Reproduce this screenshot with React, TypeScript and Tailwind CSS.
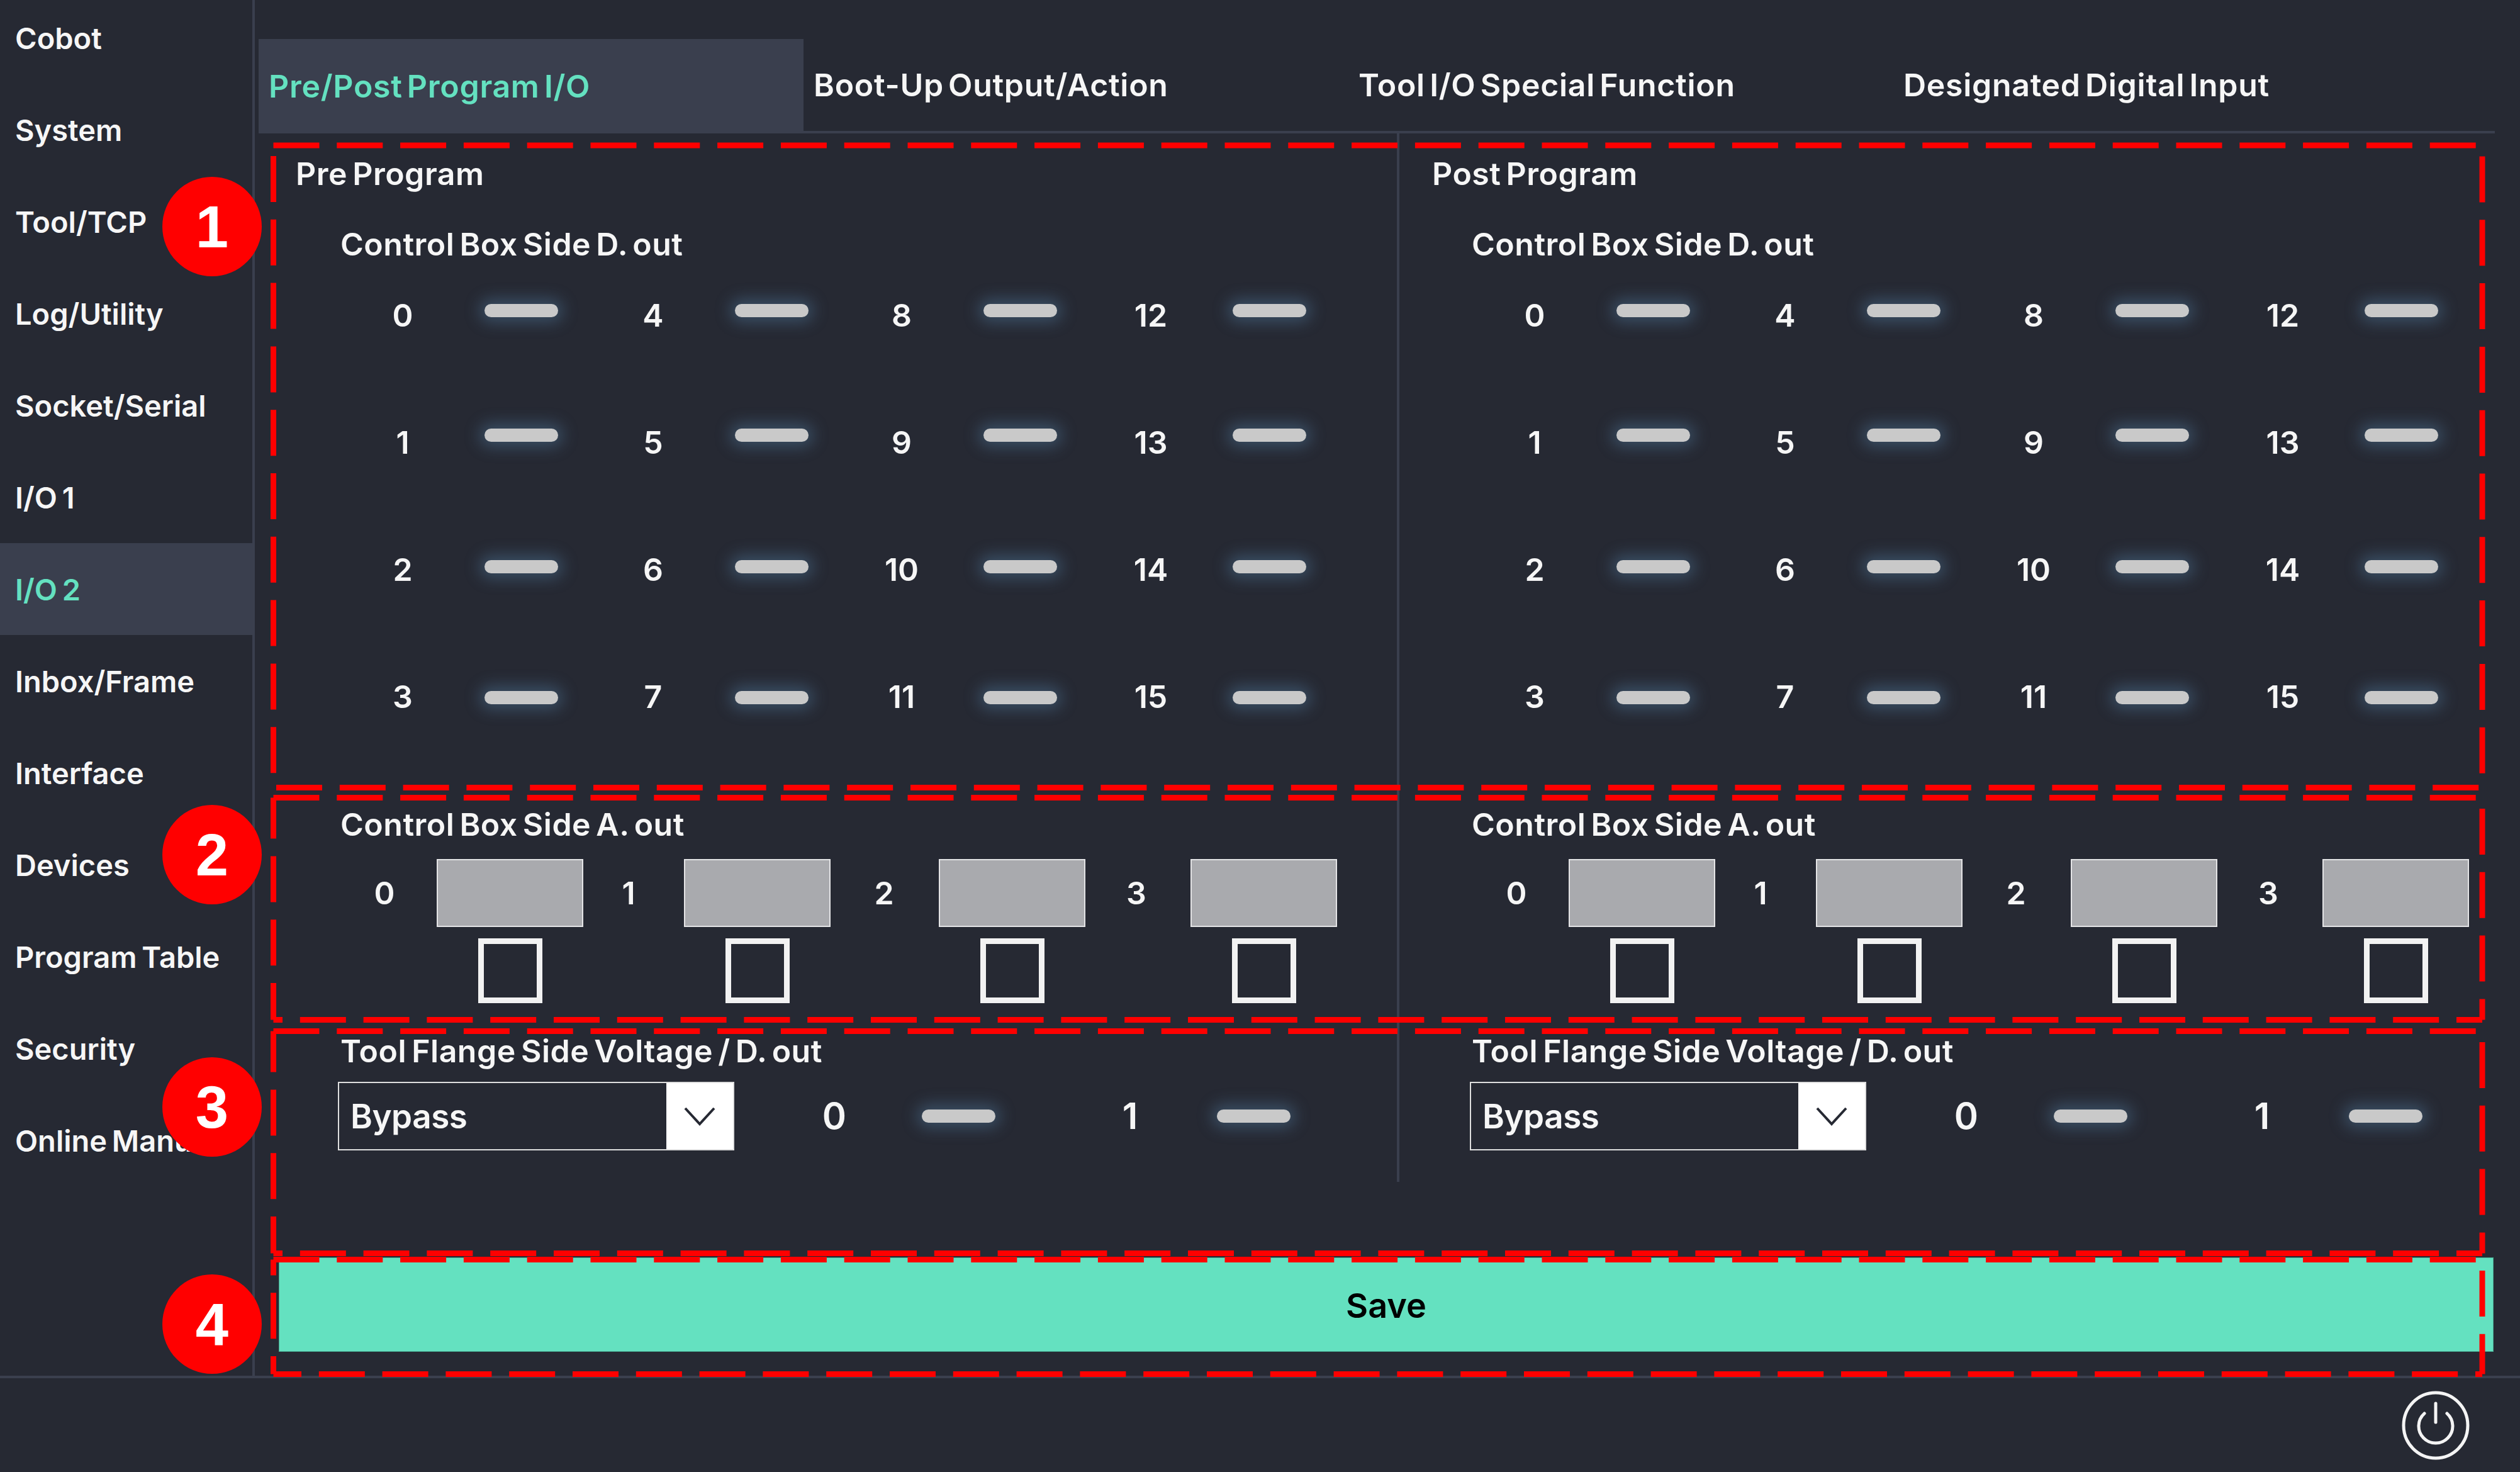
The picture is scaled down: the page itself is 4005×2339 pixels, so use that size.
import React from 'react';

const navItems = ['Cobot', 'System', 'Tool/TCP', 'Log/Utility', 'Socket/Serial', 'I/O 1', 'I/O 2', 'Inbox/Frame', 'Interface', 'Devices', 'Program Table', 'Security', 'Online Manual'];
const tabs = ['Pre/Post Program I/O', 'Boot-Up Output/Action', 'Tool I/O Special Function', 'Designated Digital Input'];
const rowShift = ['mb-[16px]', 'mb-[24px]', 'mb-[10px]', 'mt-[2px]'];
const boxGap = ['ml-[53px]', 'ml-[58px]', 'ml-[57px]', 'ml-[56px]'];

const Toggle: React.FC<{ className?: string }> = ({ className = '' }) => (
  <div className={`h-[21px] w-[117px] rounded-full bg-[#c9c9c9] shadow-[0_0_24px_8px_rgba(86,130,170,0.42)] ${className}`} />
);

const DigitalGrid = () => (
  <div className="mt-[53px] ml-[49px] grid grid-cols-[398px_395px_396px_auto] gap-y-[142px]">
    {[0, 1, 2, 3].flatMap((row) =>
      [0, 4, 8, 12].map((base) => (
        <div key={base + row} className="flex h-[60px] items-center">
          <span className="w-[100px] text-center text-[50px]">{base + row}</span>
          <Toggle className={`ml-[80px] ${rowShift[row]}`} />
        </div>
      ))
    )}
  </div>
);

const AnalogRow = () => (
  <div className="mt-[25px] ml-[40px] grid grid-cols-[388px_406px_401px_auto]">
    {[0, 1, 2, 3].map((n) => (
      <div key={n} className="flex items-start">
        <span className="flex h-[108px] w-[60px] items-center justify-center text-[50px]">{n}</span>
        <div className={`flex flex-col items-center ${boxGap[n]}`}>
          <div className="h-[108px] w-[233px] border-2 border-[#e4e4e6] bg-[#a9aaae]" />
          <div className="mt-[18px] h-[103px] w-[102px] border-[9px] border-[#f2f2f2]" />
        </div>
      </div>
    ))}
  </div>
);

const ToolRow = () => (
  <div className="mt-[19px] -ml-[4px] flex items-center">
    <div className="flex h-[109px] w-[630px] items-center justify-between border-2 border-[#dedede]">
      <span className="pt-[3px] pl-[18px] text-[53px] tracking-[-0.5px]">Bypass</span>
      <div className="flex h-full w-[106px] items-center justify-center bg-white">
        <svg width="50" height="30" viewBox="0 0 50 30" fill="none" stroke="#262933" strokeWidth="4">
          <path d="M2 2 L25 27 L48 2" />
        </svg>
      </div>
    </div>
    <span className="ml-[129px] w-[60px] text-center text-[58px]">0</span>
    <Toggle className="ml-[109px]" />
    <span className="ml-[184px] w-[60px] text-center text-[58px]">1</span>
    <Toggle className="ml-[108px]" />
  </div>
);

const Heading: React.FC<{ children: React.ReactNode; className?: string }> = ({ children, className = '' }) => (
  <div className={`h-[60px] text-[50px] leading-[60px] tracking-[0.5px] [word-spacing:-5px] ${className}`}>{children}</div>
);

const Panel: React.FC<{ title: string; className: string; titlePad: string; bodyPad: string; subPad: string }> = ({ title, className, titlePad, bodyPad, subPad }) => (
  <div className={`h-[1666px] pt-[34px] ${className}`}>
    <Heading className={titlePad}>{title}</Heading>
    <div className={bodyPad}>
      <Heading className={`mt-[52px] ${subPad}`}>Control Box Side D. out</Heading>
      <DigitalGrid />
      <Heading className={`mt-[143px] ${subPad}`}>Control Box Side A. out</Heading>
      <AnalogRow />
      <Heading className={`mt-[46px] ${subPad}`}>Tool Flange Side Voltage / D. out</Heading>
      <ToolRow />
    </div>
  </div>
);

// numbered dashed frames drawn on top of the screen; p = dash phase at the bottom-left corner
const frames = [
  { t: 231, b: 1251.5, p: 77.5 },
  { t: 1267.5, b: 1620.5, p: 14.5 },
  { t: 1638.5, b: 1991.5, p: 14.5 },
  { t: 2001.5, b: 2183.5, p: 44.5 },
];

const Annotations = () => (
  <svg className="pointer-events-none absolute inset-0" width="4005" height="2339" fill="none" stroke="#ff0000" strokeWidth="9" strokeDasharray="73 27.8">
    {frames.map((f) => (
      <g key={f.t}>
        <path d={`M434.5 ${f.t} H3945 V${f.b}`} />
        <path d={`M434.5 ${f.b} V${f.t}`} strokeDashoffset={f.p} />
        <path d={`M434.5 ${f.b} H3945`} strokeDashoffset={73 - f.p} />
      </g>
    ))}
  </svg>
);

const Badge: React.FC<{ n: number; className: string }> = ({ n, className }) => (
  <div className={`absolute left-[258px] flex h-[158px] w-[158px] items-center justify-center rounded-full bg-[#ff0000] text-[94px] font-bold text-white [font-family:'Liberation_Sans',sans-serif] ${className}`}>
    {n}
  </div>
);

export default function App() {
  return (
    <div className="relative flex h-[2339px] w-[4005px] flex-col overflow-hidden bg-[#262933] font-semibold text-[#f6f6f6] [font-family:Inter,sans-serif]">
      <div className="flex h-[2190px] border-b-4 border-[#3a3f4e]">
        <aside className="w-[405px] shrink-0 overflow-hidden border-r-4 border-[#3a3f4e]">
          <div className="-mt-[13px]">
            {navItems.map((item) => (
              <div key={item} className={`flex h-[146px] items-center pt-[2px] pl-[24px] text-[47px] [word-spacing:-4px] ${item === 'I/O 2' ? 'bg-[#3a3f4e] text-[#64e1c0]' : ''}`}>
                {item}
              </div>
            ))}
          </div>
        </aside>
        <main className="min-w-0 flex-1 pl-[6px]">
          <div className="mt-[62px] mr-[40px] flex h-[150px] border-b-4 border-[#3a3f4e]">
            {tabs.map((tab, i) => (
              <div key={tab} className={`flex w-[866px] items-center pl-[16px] text-[50px] tracking-[0.7px] [word-spacing:-6px] ${i === 0 ? '-mb-[4px] bg-[#3a3f4e] text-[#64e1c0]' : ''}`}>
                {tab}
              </div>
            ))}
          </div>
          <div className="flex">
            <Panel title="Pre Program" className="w-[1813px] shrink-0 border-r-4 border-[#3a3f4e]" titlePad="pl-[59px]" bodyPad="pl-[130px]" subPad="" />
            <Panel title="Post Program" className="w-[1781px] shrink-0" titlePad="pl-[52px]" bodyPad="pl-[116px]" subPad="-ml-[1px]" />
          </div>
          <button className="mt-[120px] ml-[32px] flex h-[150px] w-[3520px] items-center justify-center border border-[#45a58e] bg-[#64e1c0] pt-[3px] text-[54px] font-semibold text-black">
            Save
          </button>
        </main>
      </div>
      <div className="flex flex-1 justify-end pt-[20px] pr-[80px]">
        <svg width="108" height="110" viewBox="0 0 108 110" fill="none" stroke="#f4f4f4" strokeWidth="5" strokeLinecap="round">
          <ellipse cx="54" cy="55" rx="51" ry="52" />
          <path d="M36 36 A27 27 0 1 0 72 36" />
          <path d="M54 20 V50" />
        </svg>
      </div>
      <Annotations />
      <Badge n={1} className="top-[281px]" />
      <Badge n={2} className="top-[1279px]" />
      <Badge n={3} className="top-[1680px]" />
      <Badge n={4} className="top-[2025px]" />
    </div>
  );
}
